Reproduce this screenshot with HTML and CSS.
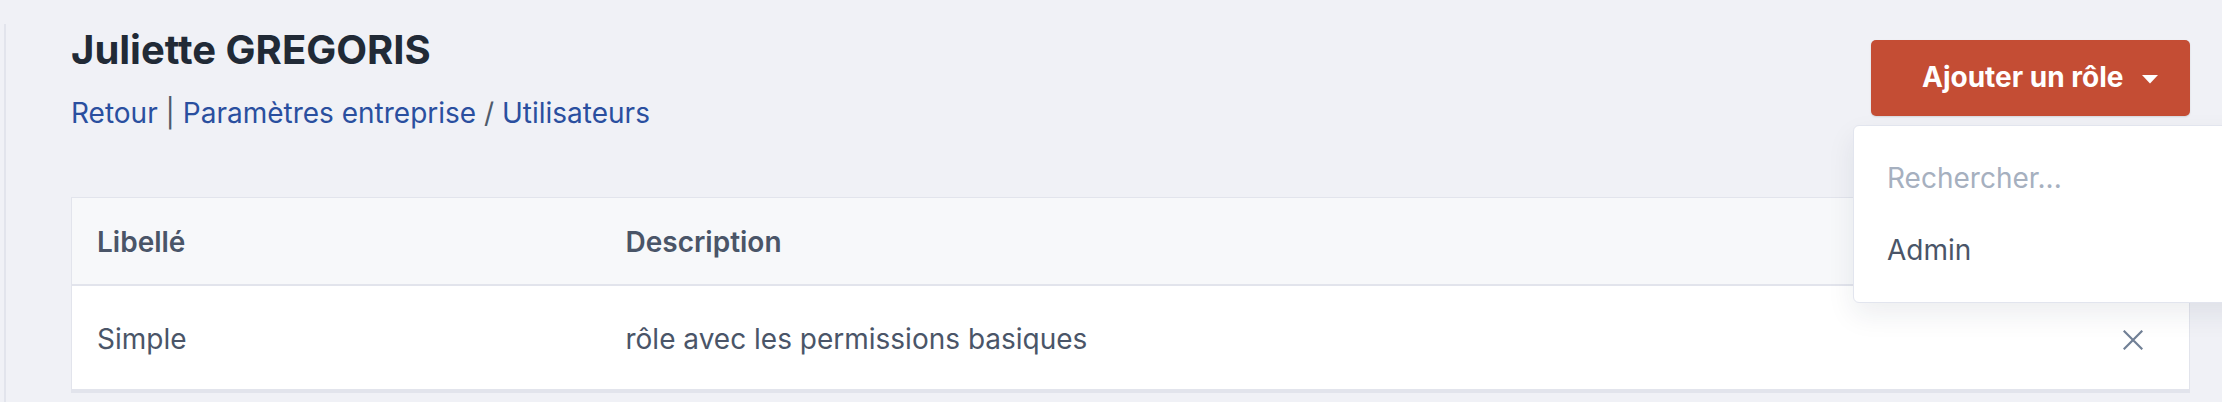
FILE: index.html
```html
<!DOCTYPE html>
<html lang="fr">
<head>
<meta charset="utf-8">
<title>Juliette GREGORIS</title>
<link rel="stylesheet" href="styles.css">
</head>
<body>
<main class="panel">
  <header class="page-header">
    <div class="title-block">
      <h1 class="title">Juliette GREGORIS</h1>
      <nav class="breadcrumb">
        <a href="#" class="crumb">Retour</a>
        <span class="sep sep-bar">|</span>
        <a href="#" class="crumb">Paramètres entreprise</a>
        <span class="sep">/</span>
        <a href="#" class="crumb">Utilisateurs</a>
      </nav>
    </div>
    <div class="actions">
      <button class="btn-add" type="button">
        <span class="btn-label">Ajouter un rôle</span>
        <svg class="caret" width="16" height="9" viewBox="0 0 16 9"><path d="M0 0 L16 0 L8 8.5 Z" fill="#ffffff"/></svg>
      </button>
      <div class="dropdown">
        <div class="search">Rechercher...</div>
        <div class="option">Admin</div>
      </div>
    </div>
  </header>

  <table class="roles">
    <colgroup>
      <col class="c-label">
      <col class="c-desc">
      <col class="c-act">
    </colgroup>
    <thead>
      <tr>
        <th>Libellé</th>
        <th>Description</th>
        <th></th>
      </tr>
    </thead>
    <tbody>
      <tr>
        <td>Simple</td>
        <td>rôle avec les permissions basiques</td>
        <td class="act">
          <button class="remove" type="button" aria-label="Retirer">
            <svg width="20" height="20" viewBox="0 0 20 20"><path d="M1.5 1.5 L18.5 18.5 M18.5 1.5 L1.5 18.5" stroke="#718096" stroke-width="2.2" stroke-linecap="square" fill="none"/></svg>
          </button>
        </td>
      </tr>
    </tbody>
  </table>
</main>
</body>
</html>
```

FILE: styles.css
```css
html, body {
  margin: 0;
  padding: 0;
  overflow: hidden;
}
body {
  background: #f0f1f6;
  font-family: "Inter", "Noto Sans", sans-serif;
  color: #4a5568;
  width: 2222px;
  height: 402px;
}
.panel {
  margin: 24px 0 0 4px;
  border-left: 2px solid #e2e4ec;
  padding: 2px 32px 0 65px;
  height: 378px;
  box-sizing: border-box;
}
.page-header {
  display: flex;
  justify-content: space-between;
  align-items: flex-start;
}
.title {
  margin: 0;
  font-size: 40px;
  line-height: 48px;
  font-weight: 700;
  color: #212a36;
}
.breadcrumb {
  margin-top: 19px;
  font-size: 28px;
  line-height: 40px;
  white-space: nowrap;
}
.crumb {
  color: #2a4f9f;
  text-decoration: none;
}
.sep {
  color: #4f5b6b;
}
.actions {
  position: relative;
  margin-top: 14px;
}
.btn-add {
  display: flex;
  align-items: center;
  height: 76px;
  width: 319px;
  box-sizing: border-box;
  padding: 0 32px 0 51px;
  border: none;
  border-radius: 5px;
  background: #c44d34;
  box-shadow: 0 1px 2px rgba(0,0,0,0.12);
  color: #ffffff;
  font-family: "Inter", sans-serif;
  font-size: 28px;
  font-weight: 700;
  cursor: pointer;
}
.btn-label {
  flex: 1;
  text-align: left;
  margin-top: -3px;
}
.caret {
  display: block;
  margin-top: 3px;
}
.dropdown {
  position: absolute;
  top: 85px;
  left: -18px;
  width: 460px;
  box-sizing: border-box;
  background: #ffffff;
  border: 1px solid #e2e5ee;
  border-radius: 6px;
  box-shadow: 0 12px 28px rgba(30, 40, 70, 0.08);
  padding: 32px 33px 32px;
  font-size: 28px;
  line-height: 40px;
  z-index: 5;
}
.search {
  color: #a6b0bf;
}
.option {
  margin-top: 32px;
  color: #4a5568;
}
.roles {
  margin-top: 64px;
  width: 100%;
  border-collapse: collapse;
  table-layout: fixed;
  background: #ffffff;
  border: 1px solid #e2e4ec;
  box-shadow: 0 3px 0 #e2e4ec;
}
.c-label { width: 529px; }
.c-act { width: 110px; }
.roles th {
  background: #f7f8fa;
  text-align: left;
  font-size: 28px;
  line-height: 32px;
  font-weight: 600;
  color: #4a5568;
  padding: 28px 25px 26px;
  border-bottom: 2px solid #e2e4ec;
}
.roles td {
  font-size: 28px;
  line-height: 32px;
  color: #4a5568;
  padding: 37px 25px 34px;
}
.roles td.act {
  padding: 0 46px 0 0;
  text-align: right;
  vertical-align: middle;
}
.remove {
  border: none;
  background: none;
  padding: 0;
  display: inline-block;
  vertical-align: middle;
  line-height: 0;
  cursor: pointer;
}
```
